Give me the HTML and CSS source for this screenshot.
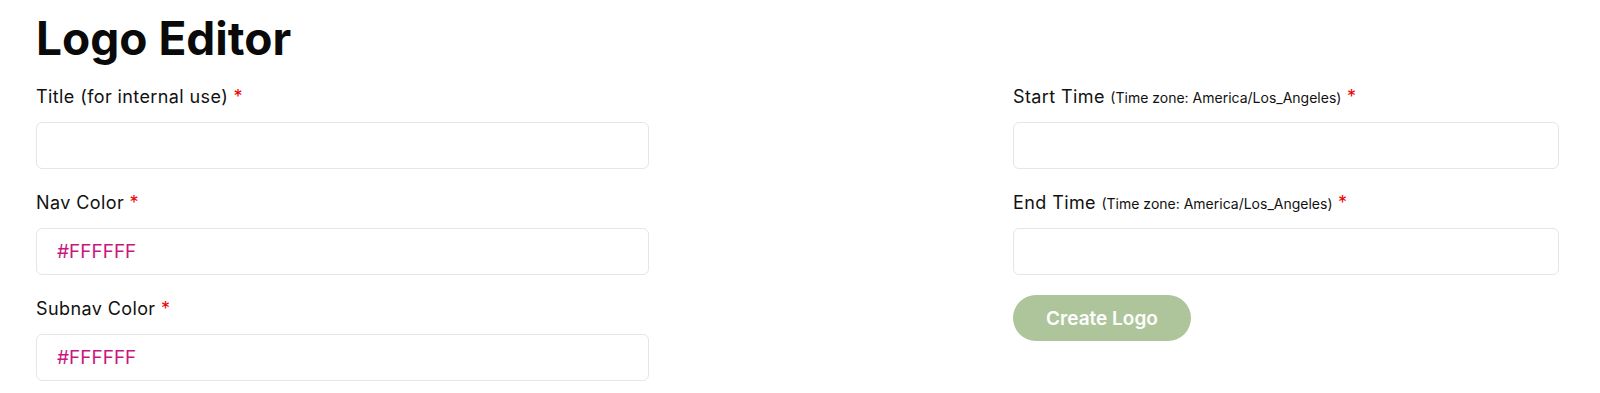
FILE: index.html
```html
<!DOCTYPE html>
<html lang="en">
<head>
  <meta charset="UTF-8" />
  <meta name="viewport" content="width=device-width, initial-scale=1.0"/>
  <link rel="stylesheet" href="styles.css">
</head>
<body>
  <h1 class="page-title">Logo Editor</h1>

  <form class="editor">
    <div class="col">
      <div class="field">
        <label for="title">Title (for internal use) <span class="req">*</span></label>
        <input class="text-input" type="text" id="title" />
      </div>
      <div class="field">
        <label for="navColor">Nav Color <span class="req">*</span></label>
        <input class="text-input" type="text" id="navColor" value="#FFFFFF" />
      </div>
      <div class="field">
        <label for="subnavColor">Subnav Color <span class="req">*</span></label>
        <input class="text-input" type="text" id="subnavColor" value="#FFFFFF" />
      </div>
    </div>

    <div class="col">
      <div class="field">
        <label for="startTime">Start Time <small>(Time zone: America/Los_Angeles)</small> <span class="req">*</span></label>
        <input class="text-input" type="text" id="startTime" />
      </div>
      <div class="field">
        <label for="endTime">End Time <small>(Time zone: America/Los_Angeles)</small> <span class="req">*</span></label>
        <input class="text-input" type="text" id="endTime" />
      </div>
      <button class="create-btn" type="button">Create Logo</button>
    </div>
  </form>
</body>
</html>
```

FILE: styles.css
```css
body {
  margin: 0;
  padding: 10px 36px 0;
  font-family: Inter, "Noto Sans", sans-serif;
  color: #111;
  background-color: #fff;
}

.page-title {
  margin: 0 0 20px 0;
  font-size: 46px;
  font-weight: 700;
  line-height: 56px;
  color: #0a0a0a;
}

.editor {
  display: grid;
  grid-template-columns: 613px 546px;
  column-gap: 364px;
  align-items: start;
}

.col {
  display: flex;
  flex-direction: column;
}

.field {
  display: flex;
  flex-direction: column;
  margin-bottom: 23px;
}

.field label {
  font-size: 18px;
  line-height: 22px;
  letter-spacing: 0.4px;
  margin-bottom: 14px;
}

.field label small {
  font-size: 14px;
  line-height: 1;
  letter-spacing: 0;
}

.req {
  color: #f00000;
}

.text-input {
  box-sizing: border-box;
  height: 47px;
  border: 1px solid #e6e6e6;
  border-radius: 6px;
  padding: 0 20px;
  font-family: inherit;
  font-size: 19px;
  color: #c8177f;
  outline: none;
}

.create-btn {
  align-self: flex-start;
  margin-top: -3px;
  width: 178px;
  height: 46px;
  border: none;
  border-radius: 23px;
  background-color: #aec59c;
  color: #fff;
  font-family: inherit;
  font-size: 19px;
  font-weight: 600;
}
```
